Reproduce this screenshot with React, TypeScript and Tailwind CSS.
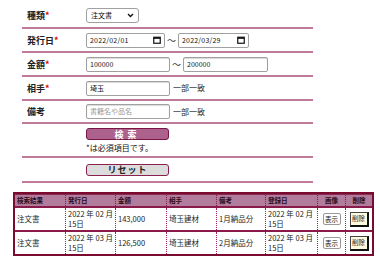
import React from "react";

const font = { fontFamily: '"Noto Sans CJK JP", "Noto Sans", sans-serif' };

function Label({ text, req }: { text: string; req?: boolean }) {
  return (
    <div className="w-[64px] pl-[5px] text-[9px] font-bold text-[#222] leading-none">
      {text}
      {req && <span className="text-[#e00000]">*</span>}
    </div>
  );
}

function TextBox({ value, placeholder, w = "w-[84px]" }: { value?: string; placeholder?: string; w?: string }) {
  return (
    <div className={`${w} h-[15px] border border-[#a0a0a0] rounded-[2px] bg-white flex items-center px-[3px] text-[7px] leading-none shadow-[inset_0_1px_1px_rgba(0,0,0,0.15)]`}>
      {value ? <span className="text-[#111]">{value}</span> : <span className="text-[#999]">{placeholder}</span>}
    </div>
  );
}

function DateBox({ value, w }: { value: string; w: string }) {
  return (
    <div className={`${w} h-[15px] border border-[#a0a0a0] rounded-[2px] bg-white flex items-center justify-between px-[3px] text-[7px] leading-none`}>
      <span className="text-[#111] tracking-[0.2px]">{value}</span>
      <svg width="8" height="8" viewBox="0 0 8 8">
        <rect x="0.75" y="1.25" width="6.5" height="6" fill="none" stroke="#111" strokeWidth="1.2" />
        <rect x="0.75" y="1.25" width="6.5" height="1.6" fill="#111" />
      </svg>
    </div>
  );
}

const row = "flex items-center border-b-2 border-[#c07b9a]";

export default function App() {
  const cols = ["w-[50px]", "w-[50px]", "w-[51px]", "w-[50px]", "w-[49px]", "w-[52px]", "w-[28px]", "w-[27px]"];
  const heads = ["検索結果", "発行日", "金額", "相手", "備考", "登録日", "画像", "削除"];
  const data = [
    ["注文書", "2022 年 02 月 15日", "143,000", "埼玉建材", "1月納品分", "2022 年 02 月 15日"],
    ["注文書", "2022 年 03 月 15日", "126,500", "埼玉建材", "2月納品分", "2022 年 03 月 15日"],
  ];
  return (
    <div className="w-[380px] h-[280px] bg-white overflow-hidden" style={font}>
      <div className="ml-[22px] w-[291px]">
        <div className={`${row} h-[29px] pt-[3px]`}>
          <Label text="種類" req />
          <div className="w-[53px] h-[15px] border border-[#a0a0a0] rounded-[3px] bg-white flex items-center justify-between px-[4px] text-[7px] leading-none">
            <span>注文書</span>
            <svg width="7" height="5" viewBox="0 0 7 5">
              <path d="M1 1 L3.5 3.5 L6 1" fill="none" stroke="#111" strokeWidth="1.4" />
            </svg>
          </div>
        </div>
        <div className={`${row} h-[24px]`}>
          <Label text="発行日" req />
          <div className="flex items-center">
            <DateBox value="2022/02/01" w="w-[79px]" />
            <span className="mx-[2px] text-[9px] text-[#333] leading-none">～</span>
            <DateBox value="2022/03/29" w="w-[71px]" />
          </div>
        </div>
        <div className={`${row} h-[24px]`}>
          <Label text="金額" req />
          <div className="flex items-center">
            <TextBox value="100000" />
            <span className="mx-[2px] text-[9px] text-[#333] leading-none">～</span>
            <TextBox value="200000" w="w-[85px]" />
          </div>
        </div>
        <div className={`${row} h-[24px]`}>
          <Label text="相手" req />
          <TextBox value="埼玉" />
          <span className="ml-[3px] text-[8px] text-[#222] leading-none">一部一致</span>
        </div>
        <div className={`${row} h-[23px]`}>
          <Label text="備考" />
          <TextBox placeholder="書籍名や品名" />
          <span className="ml-[3px] text-[8px] text-[#222] leading-none">一部一致</span>
        </div>
        <div className={`${row} h-[34px] items-start pt-[4px]`}>
          <div className="w-[64px]" />
          <div className="flex flex-col">
            <div className="w-[83px] h-[12px] rounded-[3px] bg-[#ac628d] border border-[#7a1646] flex items-center justify-center text-white text-[9px] font-bold tracking-[4px] leading-none">
              検索
            </div>
            <div className="mt-[4px] text-[8px] text-[#111] leading-none">*は必須項目です。</div>
          </div>
        </div>
        <div className={`${row} h-[25px]`}>
          <div className="w-[64px]" />
          <div className="w-[83px] h-[12px] rounded-[3px] bg-[#dcdcdc] border border-[#8a2050] flex items-center justify-center text-[#222] text-[9px] font-bold tracking-[1px] leading-none">
            リセット
          </div>
        </div>
      </div>

      <div className="ml-[13px] mt-[9px] w-[361px] border-2 border-[#7a0a2e] text-[#222]">
        <div className="flex h-[12px] bg-[#b27c9c] border-t border-[#8c2a55]">
          {heads.map((h, i) => (
            <div
              key={h}
              className={`${cols[i]} ${i > 0 ? "border-l border-dotted border-[#8a1a4a]" : ""} ${i >= 6 ? "justify-center" : "pl-[2px]"} flex items-center text-[6.5px] font-bold leading-none text-[#2a0a18]`}
            >
              {h}
            </div>
          ))}
        </div>
        {data.map((r, ri) => (
          <div key={ri} className="flex h-[24px] border-t-2 border-[#8a1a4a]">
            {r.map((c, i) => (
              <div
                key={i}
                className={`${cols[i]} ${i > 0 ? "border-l border-dotted border-[#a02060]" : ""} flex items-center pl-[2px] pr-0 text-[7.5px] leading-[10px]`}
              >
                {c}
              </div>
            ))}
            <div className={`${cols[6]} border-l border-dotted border-[#a02060] flex items-center justify-center`}>
              <div className="w-[18px] h-[12px] border border-[#999] rounded-[2px] bg-white flex items-center justify-center text-[6.5px] leading-none">
                表示
              </div>
            </div>
            <div className={`${cols[7]} border-l border-dotted border-[#a02060] flex items-center justify-center`}>
              <div className="w-[19px] h-[15px] border border-[#444] border-r-2 border-b-2 border-r-[#111] border-b-[#111] bg-[#fffbe0] flex items-center justify-center text-[6.5px] leading-none">
                削除
              </div>
            </div>
          </div>
        ))}
      </div>
    </div>
  );
}
